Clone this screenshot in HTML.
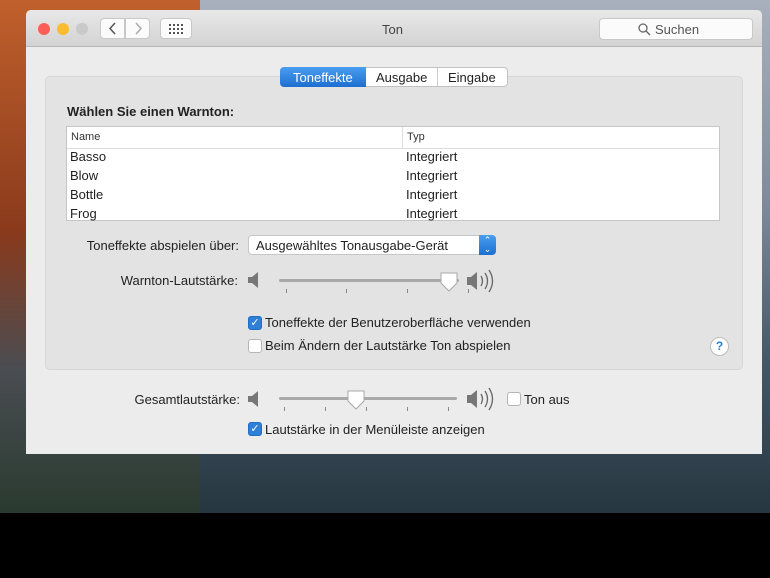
<!DOCTYPE html>
<html><head><meta charset="utf-8"><style>
*{box-sizing:border-box;margin:0;padding:0}
body{width:770px;height:578px;overflow:hidden;position:relative;font-family:"Liberation Sans",sans-serif;background:#000}
.bg{position:absolute;left:0;top:0;width:770px;height:513px;background:linear-gradient(180deg,#a8b0bc 0%,#7d8a9b 40%,#44586a 70%,#26363f 100%)}
.bg2{position:absolute;left:0;top:0;width:200px;height:513px;background:linear-gradient(180deg,#c0602c 0%,#8a3a1c 45%,#4a4d52 72%,#2a3a30 100%)}
.a{position:absolute}
.win{position:absolute;left:26px;top:10px;width:736px;height:444px;background:#ececec;border-radius:5px 5px 0 0;overflow:hidden}
.tb{position:absolute;left:0;top:0;width:736px;height:37px;background:linear-gradient(#e8e8e8,#d3d3d3);border-bottom:1px solid #b8b8b8}
.dot{position:absolute;top:13px;width:12px;height:12px;border-radius:50%}
.btn{position:absolute;background:#fbfbfb;border:1px solid #c8c8c8;border-radius:4px}
.t{position:absolute;font-size:13px;color:#222;white-space:nowrap}
.cb{position:absolute;width:14px;height:14px;border-radius:3px;background:#fff;border:1px solid #b5b5b5}
.cb.on{background:#2d7fd8;border-color:#1f6dc4;color:#fff;font-size:11px;line-height:12px;text-align:center}
.track{position:absolute;height:3px;background:#a9a9a9;border-radius:2px}
.tick{position:absolute;width:1px;height:4px;background:#888}
</style></head><body>
<div class="bg"></div><div class="bg2"></div>
<div class="win">
 <div class="tb">
  <div class="dot" style="left:12px;background:#fc5f57"></div>
  <div class="dot" style="left:31px;background:#fdbb2e"></div>
  <div class="dot" style="left:50px;background:#c9c9c9"></div>
  <div class="btn" style="left:74px;top:8px;width:25px;height:21px;border-radius:4px 0 0 4px"></div>
  <div class="btn" style="left:99px;top:8px;width:25px;height:21px;border-radius:0 4px 4px 0"></div>
  <svg class="a" style="left:74px;top:8px" width="50" height="21"><path d="M15 5 L10 10.5 L15 16" stroke="#555" stroke-width="1.5" fill="none"/><path d="M36 5 L41 10.5 L36 16" stroke="#aaa" stroke-width="1.5" fill="none"/></svg>
  <div class="btn" style="left:134px;top:8px;width:32px;height:21px"></div>
  <svg class="a" style="left:143px;top:14px" width="14" height="10"><g fill="#555"><rect x="0" y="0" width="2" height="2"/><rect x="4" y="0" width="2" height="2"/><rect x="8" y="0" width="2" height="2"/><rect x="12" y="0" width="2" height="2"/><rect x="0" y="4" width="2" height="2"/><rect x="4" y="4" width="2" height="2"/><rect x="8" y="4" width="2" height="2"/><rect x="12" y="4" width="2" height="2"/><rect x="0" y="8" width="2" height="2"/><rect x="4" y="8" width="2" height="2"/><rect x="8" y="8" width="2" height="2"/><rect x="12" y="8" width="2" height="2"/></g></svg>
  <div class="t" style="left:356px;top:12px;color:#444">Ton</div>
  <div class="btn" style="left:573px;top:8px;width:154px;height:22px;border-radius:4px"></div>
  <svg class="a" style="left:612px;top:13px" width="13" height="13"><circle cx="5" cy="5" r="4" stroke="#666" stroke-width="1.3" fill="none"/><path d="M8 8 L12 12" stroke="#666" stroke-width="1.4"/></svg>
  <div class="t" style="left:629px;top:12px;color:#555">Suchen</div>
 </div>
 <div class="a" style="left:19px;top:66px;width:698px;height:294px;background:#e3e3e3;border:1px solid #d6d6d6;border-radius:5px"></div>
 <div class="a" style="left:254px;top:57px;width:228px;height:20px;background:#fff;border:1px solid #c2c2c2;border-radius:4px"></div>
 <div class="a" style="left:254px;top:57px;width:86px;height:20px;background:linear-gradient(#4a9ef0,#1d6fd0);border-radius:4px 0 0 4px"></div>
 <div class="a" style="left:411px;top:58px;width:1px;height:18px;background:#ccc"></div>
 <div class="t" style="left:267px;top:60px;color:#fff">Toneffekte</div>
 <div class="t" style="left:350px;top:60px">Ausgabe</div>
 <div class="t" style="left:422px;top:60px">Eingabe</div>
 <div class="t" style="left:41px;top:94px;font-weight:bold">Wählen Sie einen Warnton:</div>
 <div class="a" style="left:40px;top:116px;width:654px;height:95px;background:#fff;border:1px solid #c6c6c6"></div>
 <div class="a" style="left:41px;top:138px;width:652px;height:1px;background:#ddd"></div>
 <div class="a" style="left:376px;top:117px;width:1px;height:21px;background:#ddd"></div>
 <div class="t" style="left:45px;top:121px;font-size:11px;color:#333">Name</div>
 <div class="t" style="left:381px;top:121px;font-size:11px;color:#333">Typ</div>
 <div class="t" style="left:44px;top:139px">Basso</div><div class="t" style="left:380px;top:139px">Integriert</div>
 <div class="t" style="left:44px;top:158px">Blow</div><div class="t" style="left:380px;top:158px">Integriert</div>
 <div class="t" style="left:44px;top:177px">Bottle</div><div class="t" style="left:380px;top:177px">Integriert</div>
 <div class="t" style="left:44px;top:196px">Frog</div><div class="t" style="left:380px;top:196px">Integriert</div>
 <div class="t" style="right:523px;top:228px">Toneffekte abspielen über:</div>
 <div class="a" style="left:222px;top:225px;width:248px;height:20px;background:#fff;border:1px solid #c6c6c6;border-radius:4px"></div>
 <div class="a" style="left:453px;top:225px;width:17px;height:20px;background:linear-gradient(#4a9ef0,#1d6fd0);border-radius:0 4px 4px 0;color:#fff;font-size:9px;line-height:9px;text-align:center;padding-top:1px">⌃<br>⌄</div>
 <div class="t" style="left:230px;top:228px">Ausgewähltes Tonausgabe-Gerät</div>
 <div class="t" style="right:524px;top:263px">Warnton-Lautstärke:</div>
 <svg class="a" style="left:221px;top:261px" width="14" height="18"><path d="M1 6h4l6-5v16l-6-5H1z" fill="#777"/></svg>
 <div class="track" style="left:253px;top:269px;width:180px"></div>
 <div class="tick" style="left:260px;top:279px"></div><div class="tick" style="left:320px;top:279px"></div><div class="tick" style="left:381px;top:279px"></div><div class="tick" style="left:442px;top:279px"></div>
 <svg class="a" style="left:414px;top:262px" width="18" height="20"><path d="M1 1h16v10l-8 8-8-8z" fill="#fff" stroke="#aaa"/></svg>
 <svg class="a" style="left:440px;top:259px" width="34" height="24"><path d="M1 8h4l6-5v18l-6-5H1z" fill="#777"/><path d="M15 7q3 5 0 10M19 4q5 8 0 16M23 1q7 11 0 22" stroke="#666" stroke-width="1.3" fill="none"/></svg>
 <div class="cb on" style="left:222px;top:306px">✓</div>
 <div class="t" style="left:239px;top:305px">Toneffekte der Benutzeroberfläche verwenden</div>
 <div class="cb" style="left:222px;top:329px"></div>
 <div class="t" style="left:239px;top:328px">Beim Ändern der Lautstärke Ton abspielen</div>
 <div class="a" style="left:684px;top:327px;width:19px;height:19px;border-radius:50%;background:#fff;border:1px solid #bbb;color:#2d7fd8;font-size:12px;text-align:center;line-height:17px;font-weight:bold">?</div>
 <div class="t" style="right:522px;top:382px">Gesamtlautstärke:</div>
 <svg class="a" style="left:221px;top:380px" width="14" height="18"><path d="M1 6h4l6-5v16l-6-5H1z" fill="#777"/></svg>
 <div class="track" style="left:253px;top:387px;width:178px"></div>
 <div class="tick" style="left:258px;top:397px"></div><div class="tick" style="left:299px;top:397px"></div><div class="tick" style="left:340px;top:397px"></div><div class="tick" style="left:381px;top:397px"></div><div class="tick" style="left:422px;top:397px"></div>
 <svg class="a" style="left:321px;top:380px" width="18" height="20"><path d="M1 1h16v10l-8 8-8-8z" fill="#fff" stroke="#aaa"/></svg>
 <svg class="a" style="left:440px;top:377px" width="34" height="24"><path d="M1 8h4l6-5v18l-6-5H1z" fill="#777"/><path d="M15 7q3 5 0 10M19 4q5 8 0 16M23 1q7 11 0 22" stroke="#666" stroke-width="1.3" fill="none"/></svg>
 <div class="cb" style="left:481px;top:382px"></div>
 <div class="t" style="left:498px;top:382px">Ton aus</div>
 <div class="cb on" style="left:222px;top:412px">✓</div>
 <div class="t" style="left:239px;top:412px">Lautstärke in der Menüleiste anzeigen</div>
</div>
</body></html>
